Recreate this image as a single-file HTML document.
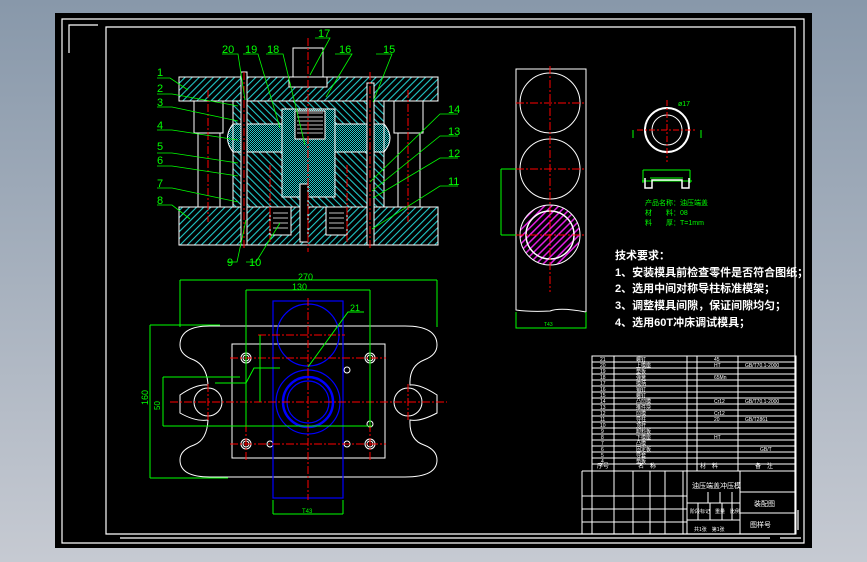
<!DOCTYPE html>
<html><head><meta charset="utf-8"><style>
html,body{margin:0;padding:0}
body{width:867px;height:562px;overflow:hidden;background:linear-gradient(#8898aa,#c6cad2);}
svg{position:absolute;left:0;top:0}
text{font-family:"Liberation Sans","Noto Sans CJK SC",sans-serif}
</style></head><body>
<svg width="867" height="562" viewBox="0 0 867 562">
<defs>
<pattern id="h" width="5" height="5" patternUnits="userSpaceOnUse" patternTransform="rotate(45)">
<rect width="5" height="5" fill="#000"/><rect width="1.1" height="5" fill="#22c8c8"/></pattern>
<pattern id="h2" width="5" height="5" patternUnits="userSpaceOnUse" patternTransform="rotate(-45)">
<rect width="5" height="5" fill="#000"/><rect width="1.1" height="5" fill="#22c8c8"/></pattern>
<pattern id="c" width="2" height="2" patternUnits="userSpaceOnUse">
<rect width="2" height="2" fill="#000"/><rect width="1" height="1" fill="#2cc"/><rect x="1" y="1" width="1" height="1" fill="#2cc"/></pattern>
<pattern id="m" width="5" height="5" patternUnits="userSpaceOnUse" patternTransform="rotate(45)">
<rect width="5" height="5" fill="#000"/><rect width="1.5" height="5" fill="#e020e0"/></pattern>
</defs>
<rect x="55" y="13" width="757" height="535" fill="#000"/>
<g fill="none" stroke="#fff" stroke-width="1.2">
<path d="M62 19H804V543H62Z"/>
<path d="M69 53V25H98"/>
<path d="M106 27H795V534H106Z"/>
<path d="M798 530V510M801 538H780M770 538H120"/>
</g>

<!-- top section view -->
<g stroke="#fff" stroke-width="1">
<rect x="179" y="77" width="259" height="24" fill="url(#h)"/>
<rect x="179" y="207" width="259" height="38" fill="url(#h)"/>
<rect x="194" y="101" width="29" height="32" fill="#000"/>
<rect x="198" y="133" width="22" height="74" fill="#000"/>
<rect x="394" y="101" width="29" height="32" fill="#000"/>
<rect x="398" y="133" width="22" height="74" fill="#000"/>
<rect x="233" y="101" width="151" height="106" fill="url(#h2)"/>
<rect x="233" y="124" width="151" height="28" fill="url(#c)"/>
<path d="M233 124 Q222 138 233 152Z M384 124 Q396 138 384 152Z" fill="url(#c)"/>
<rect x="282" y="109" width="53" height="88" fill="url(#c)"/>
<rect x="295" y="111" width="30" height="28" fill="#000"/>
<rect x="293" y="48" width="30" height="29" fill="#000"/>
<rect x="289" y="77" width="38" height="10" fill="#000"/>
<rect x="300" y="184" width="8" height="58" fill="#000"/>
<rect x="270" y="207" width="21" height="28" fill="#000"/>
<rect x="326" y="207" width="21" height="28" fill="#000"/>
<rect x="241" y="72" width="6" height="173" fill="#000"/>
<rect x="367" y="83" width="7" height="162" fill="#000"/>
</g>
<g stroke="#fff" stroke-width="0.8" fill="none">
<path d="M297 113h26M297 117h26M297 121h26M297 125h26M297 129h26M297 133h26"/>
<path d="M273 213h15M273 218h15M273 223h15M273 228h15M329 213h15M329 218h15M329 223h15M329 228h15"/>
</g>
<g stroke="#f00" stroke-width="1" stroke-dasharray="8 2 2 2">
<path d="M308 38V252M208 90V222M408 90V222M244 72V250M370 72V250M270 165V242M347 165V242"/>
</g>
<g stroke="#0f0" stroke-width="0.8" fill="none">
<path d="M157 78H170L188 90M157 94H172L238 106M157 107H172L238 121M157 130H172L238 140M157 153H172L238 163M157 166H172L238 176M157 188H172L238 202M157 205H172L190 219"/>
<path d="M222 54H238L245 100M243 54H258L280 128M266 54H283L305 145M335 54H352L326 97M376 54H392L373 102M315 38H330L310 75"/>
<path d="M458 114H440L370 182M458 136H440L372 191M458 158H440L373 198M458 186H440L372 229"/>
<path d="M227 262H237L246 220M246 262H256L280 223"/>
</g>
<g fill="#0f0" font-size="11">
<text x="157" y="76">1</text><text x="157" y="92">2</text><text x="157" y="106">3</text><text x="157" y="129">4</text><text x="157" y="150">5</text><text x="157" y="164">6</text><text x="157" y="187">7</text><text x="157" y="204">8</text>
<text x="222" y="53">20</text><text x="245" y="53">19</text><text x="267" y="53">18</text><text x="318" y="37">17</text><text x="339" y="53">16</text><text x="383" y="53">15</text>
<text x="448" y="113">14</text><text x="448" y="135">13</text><text x="448" y="157">12</text><text x="448" y="185">11</text>
<text x="227" y="266">9</text><text x="249" y="266">10</text>
</g>

<!-- plan view -->
<g fill="none" stroke="#fff" stroke-width="1">
<path d="M210 326H405Q437 326 437 345Q437 355 424 360Q409 366 410 385Q420 384 437 395V413Q420 422 410 420Q409 440 424 445Q437 450 437 460Q437 477 405 477H210Q180 477 180 460Q180 450 194 445Q207 440 208 420Q196 422 180 413V395Q196 384 208 385Q207 366 194 360Q180 355 180 345Q180 326 210 326Z"/>
<rect x="232" y="344" width="153" height="114"/>
<circle cx="208" cy="402" r="14"/><circle cx="408" cy="402" r="14"/>
<circle cx="246" cy="358" r="5"/><circle cx="246" cy="358" r="3"/>
<circle cx="370" cy="358" r="5"/><circle cx="370" cy="358" r="3"/>
<circle cx="246" cy="444" r="5"/><circle cx="246" cy="444" r="3"/>
<circle cx="370" cy="444" r="5"/><circle cx="370" cy="444" r="3"/>
<circle cx="347" cy="370" r="3"/><circle cx="270" cy="444" r="3"/><circle cx="347" cy="444" r="3"/><circle cx="370" cy="424" r="3"/>
</g>
<g fill="none" stroke="#00f" stroke-width="1.2">
<rect x="273" y="301" width="70" height="197"/>
<circle cx="308" cy="335" r="31"/>
<circle cx="308" cy="402" r="32"/><circle cx="308" cy="402" r="25" stroke-width="2.5"/><circle cx="308" cy="402" r="21"/>
</g>
<g stroke="#f00" stroke-width="1" stroke-dasharray="8 2 2 2">
<path d="M170 402H447M230 358H386M230 444H386M258 335H345M308 298V500M246 340V462M370 340V462M208 384V420M408 384V420"/>
</g>
<g stroke="#0f0" stroke-width="1" fill="none">
<path d="M180 280V327M437 280V327M180 280H437M246 290V425M370 290V425M246 290H370M150 325V478M150 325H220M150 478H228M163 377V426M163 377H240M163 426H372M260 335V402M273 500V514M343 500V514M273 514H343M308 367L348 312H364M215 383H246L254 368H280"/>
</g>
<g fill="#0f0" font-size="9">
<text x="298" y="280">270</text><text x="292" y="290">130</text>
<text x="350" y="311">21</text>
<text x="148" y="405" transform="rotate(-90 148 405)">160</text>
<text x="160" y="410" transform="rotate(-90 160 410)" font-size="8">50</text>
<text x="302" y="513" font-size="6">T43</text>
</g>

<!-- strip -->
<g fill="none" stroke="#fff" stroke-width="1">
<path d="M516 69H586V312Q560 307 550 311Q530 312 516 310Z"/>
<circle cx="550" cy="103" r="30"/><circle cx="550" cy="169" r="30"/>
</g>
<circle cx="550" cy="235" r="30" fill="url(#m)" stroke="#fff"/>
<circle cx="550" cy="235" r="24" fill="none" stroke="#fff" stroke-width="1.5"/>
<g stroke="#f00" stroke-width="1" stroke-dasharray="8 2 2 2">
<path d="M550 66V292M516 103H586M516 169H586M516 235H586"/>
</g>
<g stroke="#0f0" stroke-width="1" fill="none"><path d="M501 169V235M501 169H516M501 235H516M516 312V328H586V312"/></g>
<text x="544" y="326" fill="#0f0" font-size="5">T43</text>

<!-- part -->
<circle cx="667" cy="130" r="22" fill="none" stroke="#fff" stroke-width="2"/>
<circle cx="667" cy="130" r="15" fill="none" stroke="#fff"/>
<g stroke="#f00" stroke-dasharray="6 2 2 2"><path d="M637 130H697M667 100V162"/></g>
<g stroke="#0f0" fill="none"><path d="M633 130V138M701 130V138M643 170H690M643 170V183M690 170V183M650 178H683M642 181H692"/></g>
<path d="M645 178V188H652V180H682V188H689V178" fill="none" stroke="#fff" stroke-width="1.5"/>
<g fill="#0f0" font-size="7"><text x="678" y="106">ø17</text><text x="645" y="205">产品名称：油压端盖</text><text x="645" y="215">材　　料：08</text><text x="645" y="225">料　　厚：T=1mm</text></g>

<g fill="#fff" font-size="11" font-weight="bold">
<text x="615" y="259">技术要求：</text>
<text x="615" y="276">1、安装模具前检查零件是否符合图纸；</text>
<text x="615" y="292">2、选用中间对称导柱标准模架；</text>
<text x="615" y="309">3、调整模具间隙，保证间隙均匀；</text>
<text x="615" y="326">4、选用60T冲床调试模具；</text>
</g>

<!-- title block -->
<g stroke="#fff" stroke-width="1" fill="none">
<rect x="592" y="356" width="204" height="178"/>
<path d="M592 362H796M592 368H796M592 374H796M592 380H796M592 386H796M592 392H796M592 398H796M592 404H796M592 410H796M592 416H796M592 422H796M592 428H796M592 434H796M592 440H796M592 446H796M592 452H796M592 458H796M592 464H796M592 471H796"/>
<path d="M614 356V534M687 356V471M697 356V471M738 356V471M650 471V534M665 471V534M683 471V534M633 471V534M582 471V534"/>
<path d="M582 471H592M582 496H687M582 509H687M582 522H687M582 534H592M687 471V534M740 471V534M740 492H796M740 513H796M687 503H740M687 520H740M698 503V520M710 503V520M722 503V520M732 492V520M708 492V503M720 492V503"/>
</g>
<g fill="#fff" font-size="5">
<text x="600" y="361">21</text><text x="600" y="367">20</text><text x="600" y="373">19</text><text x="600" y="379">18</text><text x="600" y="385">17</text><text x="600" y="391">16</text><text x="600" y="397">15</text><text x="600" y="403">14</text><text x="600" y="409">13</text><text x="600" y="415">12</text><text x="600" y="421">11</text><text x="600" y="427">10</text><text x="601" y="433">9</text><text x="601" y="439">8</text><text x="601" y="445">7</text><text x="601" y="451">6</text><text x="601" y="457">5</text><text x="601" y="463">4</text>
<text x="636" y="361">螺钉</text><text x="636" y="367">上模座</text><text x="636" y="373">垫板</text><text x="636" y="379">弹簧</text><text x="636" y="385">模柄</text><text x="636" y="391">销钉</text><text x="636" y="397">螺钉</text><text x="636" y="403">凸凹模</text><text x="636" y="409">推件块</text><text x="636" y="415">凹模</text><text x="636" y="421">导柱</text><text x="636" y="427">顶杆</text><text x="636" y="433">卸料板</text><text x="636" y="439">下模座</text><text x="636" y="445">凸模</text><text x="636" y="451">固定板</text><text x="636" y="457">导套</text><text x="636" y="463">垫板</text>
<text x="714" y="361">45</text><text x="714" y="367">HT</text><text x="714" y="379">65Mn</text><text x="714" y="403">Cr12</text><text x="714" y="415">Cr12</text><text x="714" y="421">20</text><text x="714" y="439">HT</text>
<text x="745" y="367">GB/T70.1-2000</text><text x="745" y="403">GB/T70.1-2000</text><text x="745" y="421">GB/T2861</text><text x="760" y="451">GB/T</text>
<text x="597" y="468" font-size="6">序号</text><text x="638" y="468" font-size="6">名　称</text><text x="700" y="468" font-size="6">材　料</text><text x="755" y="468" font-size="6">备　注</text>
<text x="692" y="488" font-size="7">油压端盖冲压模</text><text x="754" y="506" font-size="7">装配图</text><text x="750" y="527" font-size="7">图样号</text>
<text x="690" y="513" font-size="5">阶段标记　重量　比例</text><text x="694" y="531" font-size="5">共1张　第1张</text>
</g>
</svg>
</body></html>
